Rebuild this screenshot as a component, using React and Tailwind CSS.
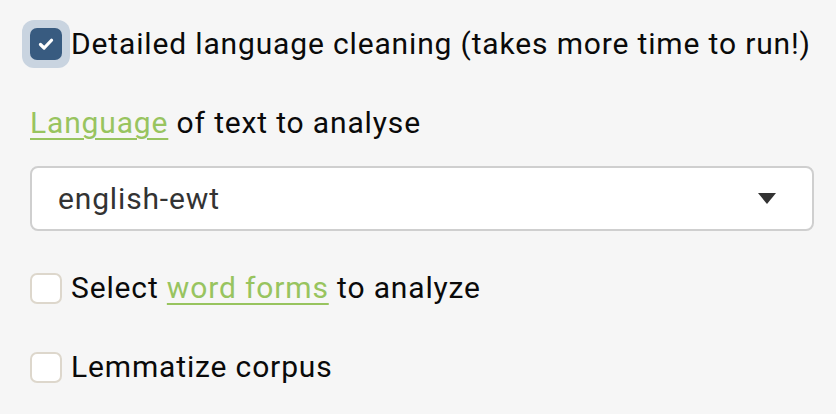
import React from 'react';

const Box = ({ checked }) => {
  if (checked) {
    return (
      <span className="flex h-12 w-12 shrink-0 items-center justify-center rounded-[12px] bg-[#c9d4e0] -ml-2 mr-[1px]">
        <span className="flex h-8 w-8 items-center justify-center rounded-[7px] bg-[#385b80]">
          <svg width="20" height="20" viewBox="0 0 16 16" fill="none">
            <path d="M3.6 8.4l2.9 2.8 5.9-6.2" stroke="#fff" strokeWidth="2.6" strokeLinecap="round" strokeLinejoin="round" />
          </svg>
        </span>
      </span>
    );
  }
  return <span className="h-[31px] w-[32px] shrink-0 rounded-[7px] border-2 border-[#ddd7cc] bg-white mr-[9px]" />;
};

export default function App() {
  return (
    <div className="min-h-[414px] w-[836px] bg-[#f6f6f6] pl-[30px] pr-[22px] pt-5 font-['Roboto',sans-serif] text-[30px] leading-[36px] tracking-[0.85px] text-[#0a0a0a]">
      <label className="flex items-center h-12">
        <Box checked />
        <span>Detailed language cleaning (takes more time to run!)</span>
      </label>

      <div className="mt-[37px]">
        <a href="#" className="text-[#98c45f] underline underline-offset-[5px] decoration-2">Language</a> of text to analyse
      </div>

      <div className="mt-[25px] flex h-[65px] items-center justify-between rounded-[8px] border-2 border-[#cfcfcf] bg-white pl-[26px] pr-[36px] text-[#333]">
        <span>english-ewt</span>
        <svg width="18" height="11" viewBox="0 0 18 11">
          <path d="M0 0h18L9 11z" fill="#333" />
        </svg>
      </div>

      <label className="mt-[39px] flex items-center">
        <Box />
        <span>
          Select{' '}
          <a href="#" className="text-[#98c45f] underline underline-offset-[5px] decoration-2">word forms</a>{' '}
          to analyze
        </span>
      </label>

      <label className="mt-[43px] flex items-center">
        <Box />
        <span>Lemmatize corpus</span>
      </label>
    </div>
  );
}
